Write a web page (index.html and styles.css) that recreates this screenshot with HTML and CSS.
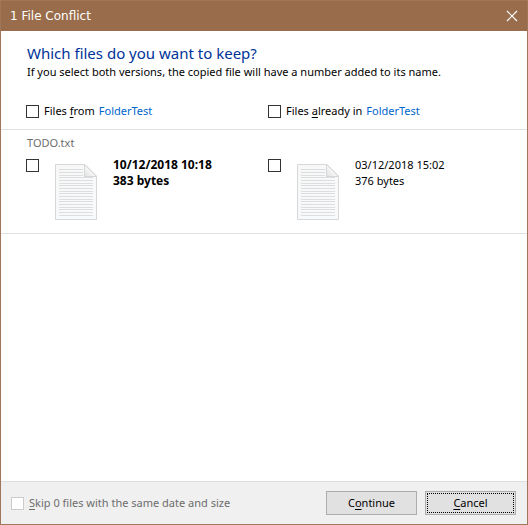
FILE: index.html
```html
<!DOCTYPE html>
<html lang="en">
<head>
<meta charset="utf-8">
<title>1 File Conflict</title>
<link rel="stylesheet" href="styles.css">
</head>
<body>
<svg class="defs" aria-hidden="true">
  <defs>
    <linearGradient id="paper" x1="0" y1="0" x2="1" y2="1">
      <stop offset="0" stop-color="#f7f7f7"/><stop offset="1" stop-color="#f8fafc"/>
    </linearGradient>
    <linearGradient id="fold" x1="0" y1="1" x2="1" y2="0">
      <stop offset="0" stop-color="#e0e0e0"/><stop offset="0.5" stop-color="#f8f8f8"/>
    </linearGradient>
    <symbol id="document" viewBox="0 0 42 56">
      <path d="M.5 .5H30L41.500 12V55.500H.5Z" fill="url(#paper)" stroke="#d6d8da"/>
      <path d="M4 5.500H28M4 8.500H28M4 11.500H28M4 13.500H38M4 16.500H38M4 19.500H38M4 21.500H38M4 24.500H38M4 27.500H38M4 29.500H38M4 32.500H38M4 35.500H38M4 37.500H38M4 40.500H38M4 43.500H38M4 45.500H38M4 48.500H38M4 51.500H38" stroke="#dddee0"/>
      <path d="M29.500 .5V12.500H41.500Z" fill="url(#fold)" stroke="#d6d6d6"/>
    </symbol>
  </defs>
</svg>
<main class="dialog">
  <header class="titlebar">
    <span>1 File Conflict</span>
    <button class="close" type="button" aria-label="Close">
      <svg width="12" height="12" viewBox="0 0 12 12"><path d="M1 1L11 11M11 1L1 11" stroke="#fff" stroke-width="1.200"/></svg>
    </button>
  </header>
  <section class="intro">
    <h1>Which files do you want to keep?</h1>
    <p>If you select both versions, the copied file will have a number added to its name.</p>
    <div class="columns sources">
      <div class="choice"><input type="checkbox" id="from"><label for="from">Files <u>f</u>rom</label><a href="#">FolderTest</a></div>
      <div class="choice"><input type="checkbox" id="already"><label for="already">Files <u>a</u>lready in</label><a href="#">FolderTest</a></div>
    </div>
  </section>
  <section class="conflict">
    <h2>TODO.txt</h2>
    <div class="columns">
      <div class="version newer">
        <input type="checkbox" id="new"><label for="new"><svg class="document"><use href="#document"/></svg><span>10/12/2018 10:18<br>383 bytes</span></label>
      </div>
      <div class="version">
        <input type="checkbox" id="old"><label for="old"><svg class="document"><use href="#document"/></svg><span>03/12/2018 15:02<br>376 bytes</span></label>
      </div>
    </div>
  </section>
  <footer class="actions">
    <div class="choice skip"><input type="checkbox" id="skip" disabled><label for="skip"><u>S</u>kip 0 files with the same date and size</label></div>
    <button class="action" type="button">C<u>o</u>ntinue</button>
    <button class="action focused" type="button"><u>C</u>ancel</button>
  </footer>
</main>
</body>
</html>
```
FILE: styles.css
```css
* { box-sizing: border-box; }

body {
  margin: 0;
  font: 11px/16px "Noto Sans", "Open Sans", sans-serif;
  color: #000;
}

h1, h2, p { margin: 0; font-weight: 400; }

u { text-underline-offset: 2px; text-decoration-thickness: 1px; }

.defs { position: absolute; width: 0; height: 0; }

.dialog {
  display: flex;
  flex-direction: column;
  min-height: 100vh;
  border: 1px solid #a07759;
  background: #fff;
}

.titlebar {
  display: flex;
  align-items: center;
  justify-content: space-between;
  height: 30px;
  padding: 0 9px;
  background: #996d4b;
  color: #fff;
  font-family: "DejaVu Sans", sans-serif;
}

.close {
  display: flex;
  padding: 0;
  border: 0;
  background: none;
}

.intro {
  padding: 11px 26px 10px;
  border-bottom: 1px solid #e2e2e2;
}

h1 {
  color: #003399;
  font-size: 15px;
  line-height: 22px;
}

.columns {
  display: grid;
  grid-template-columns: 242px 1fr;
  margin-left: -1px;
}

.sources { margin-top: 23px; }

.choice {
  display: flex;
  align-items: center;
  gap: 4px;
}

.choice label { margin-left: 1px; }

input {
  appearance: none;
  flex: none;
  width: 13px;
  height: 13px;
  margin: 0;
  border: 1px solid #333;
  background: #fff;
}

input:checked { background: #333; box-shadow: inset 0 0 0 2px #fff; }

input:disabled { border-color: #ccc; }

a { color: #0066cc; text-decoration: none; }

.conflict {
  padding: 5px 26px 13px;
  border-bottom: 1px solid #e2e2e2;
}

h2 {
  color: #6d6d6d;
  font-size: 11px;
  line-height: 16px;
}

.titlebar, .newer { font-size: 12px; }

.version { display: flex; padding-top: 8px; }

.version label { display: flex; gap: 16px; margin-left: 16px; }

.version span { margin-top: -2px; }

.newer { font-weight: 700; }

.document { width: 42px; height: 56px; margin-top: 5px; }

.actions {
  display: flex;
  align-items: center;
  gap: 8px;
  height: 43px;
  margin-top: auto;
  padding: 0 11px 0 10px;
  border-top: 1px solid #dfdfdf;
  background: #f0f0f0;
}

.skip { flex: 1; color: #6d6d6d; }

.action {
  width: 91px;
  height: 24px;
  padding: 0;
  border: 1px solid #adadad;
  background: #e1e1e1;
  color: #000;
  font: inherit;
}

.focused { outline: 1px dotted #000; outline-offset: -3px; }
```
